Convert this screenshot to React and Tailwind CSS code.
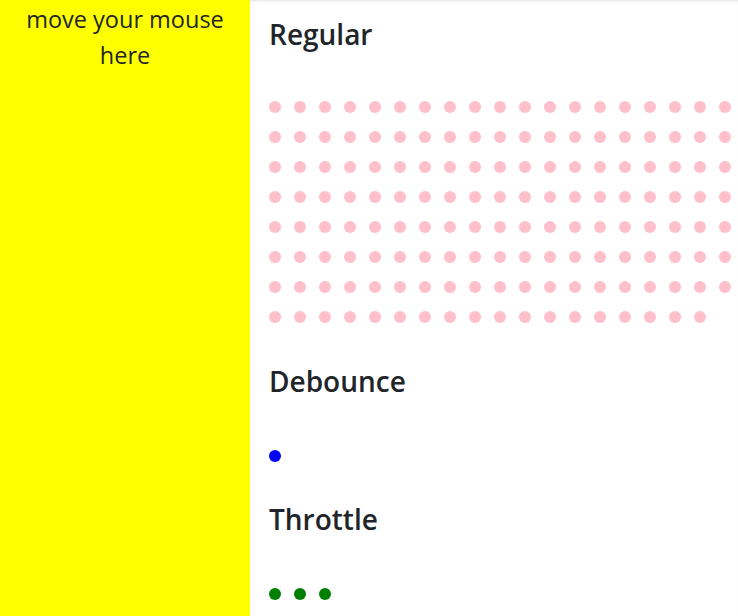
const REGULAR = 151

function Dot({ color }) {
  return <span className={`block w-3 h-3 rounded-full ${color}`} />
}

function Section({ title, count, color, top, gap }) {
  return (
    <section className={top}>
      <h3 className="text-[28px] leading-[34px] font-semibold text-[#212529]">{title}</h3>
      <div className={`flex flex-wrap gap-x-[13px] gap-y-[18px] ${gap}`}>
        {Array.from({ length: count }).map((_, i) => <Dot key={i} color={color} />)}
      </div>
    </section>
  )
}

export default function App() {
  return (
    <div className="flex min-h-screen font-['Open_Sans',sans-serif] text-[#212529]">
      <div className="w-[250px] shrink-0 bg-[#ffff00] pt-px text-center text-[23.5px] leading-[36px]">
        move your mouse here
      </div>
      <div className="flex-1 pl-[19px] shadow-[inset_0_3px_3px_-2px_rgba(0,0,0,0.12)]">
        <Section title="Regular" count={REGULAR} color="bg-[#ffc0cb]" top="pt-[17px]" gap="mt-[50px]" />
        <Section title="Debounce" count={1} color="bg-[#0000ff]" top="pt-[41px]" gap="mt-[52px]" />
        <Section title="Throttle" count={3} color="bg-[#008000]" top="pt-[40px]" gap="mt-[52px]" />
      </div>
    </div>
  )
}
